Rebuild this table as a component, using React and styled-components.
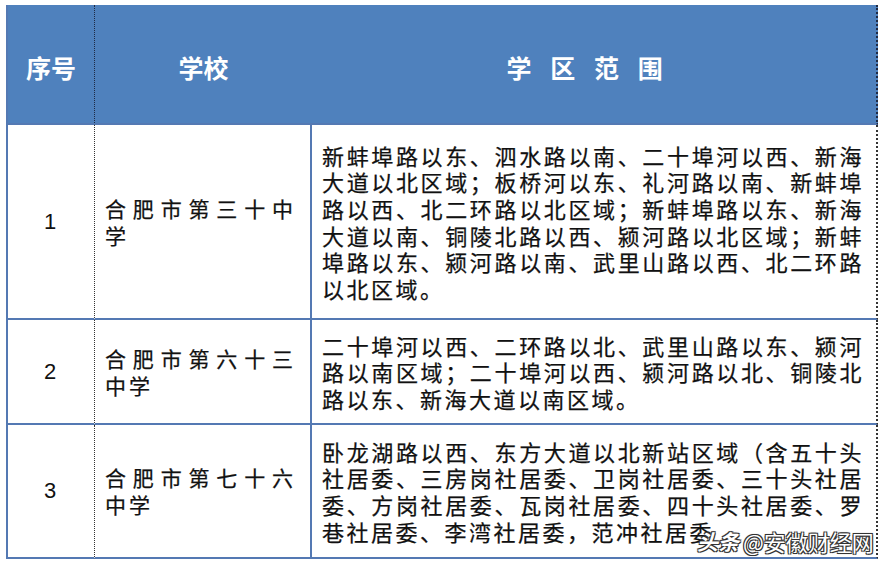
import React from 'react';
import styled, { createGlobalStyle } from 'styled-components';

const GlobalStyle = createGlobalStyle`
  html, body {
    margin: 0;
    padding: 0;
    background: #ffffff;
  }
  body {
    font-family: "Noto Sans CJK SC", "Noto Sans", sans-serif;
    color: #111111;
  }
`;

const Page = styled.div`
  width: 882px;
  height: 562px;
  position: relative;
  overflow: hidden;
  padding: 5px 0 0 6px;
  box-sizing: border-box;
`;

const Table = styled.table`
  width: 870px;
  border-collapse: separate;
  border-spacing: 0;
  table-layout: fixed;
  border-left: 2px solid #5479b3;
`;

const HeadCell = styled.th`
  height: 120px;
  padding: 6px 0 0 0;
  background: #4f81bd;
  color: #ffffff;
  font-size: 25px;
  font-weight: 700;
  text-align: center;
  vertical-align: middle;
  letter-spacing: ${(p) => p.$spread || '0'};
  border-right: ${(p) => p.$edge || 'none'};
  border-bottom: 2px solid #5479b3;
  box-sizing: border-box;
`;

const Row = styled.tr`
  height: ${(p) => p.$h}px;
`;

const NumCell = styled.td`
  padding: 0 2px 0 0;
  text-align: center;
  vertical-align: middle;
  font-family: "Liberation Sans", Arial, sans-serif;
  font-size: 22px;
  border-right: 1px dotted #333333;
  border-bottom: 2px solid #5479b3;
`;

const SchoolCell = styled.td`
  padding: 0 14px 0 10px;
  vertical-align: middle;
  font-size: 21px;
  line-height: 27px;
  letter-spacing: 3px;
  text-align: justify;
  -webkit-text-stroke: 0.25px #111;
  border-right: 2px solid #5479b3;
  border-bottom: 2px solid #5479b3;
`;

const AreaCell = styled.td`
  padding: 0 12px 0 10px;
  vertical-align: middle;
  font-size: 22px;
  line-height: 26.6px;
  letter-spacing: 2.5px;
  text-align: justify;
  -webkit-text-stroke: 0.25px #111;
  border-right: 2px dotted #333333;
  border-bottom: 2px solid #5479b3;
`;

const Watermark = styled.div`
  position: absolute;
  left: 697px;
  top: 525px;
  display: flex;
  align-items: center;
  gap: 4px;
  font-size: 22px;
  color: #ffffff;
  letter-spacing: 0;
  text-shadow:
    -1px -1px 0 #333, 1px -1px 0 #333, -1px 1px 0 #333, 1px 1px 0 #333,
    0 0 2px #333;
`;

const Brand = styled.span`
  font-style: italic;
  font-weight: 700;
  font-size: 21px;
`;

const rows = [
  {
    no: '1',
    h: 195,
    school: '合肥市第三十中学',
    area: '新蚌埠路以东、泗水路以南、二十埠河以西、新海大道以北区域；板桥河以东、礼河路以南、新蚌埠路以西、北二环路以北区域；新蚌埠路以东、新海大道以南、铜陵北路以西、颍河路以北区域；新蚌埠路以东、颍河路以南、武里山路以西、北二环路以北区域。',
  },
  {
    no: '2',
    h: 105,
    school: '合肥市第六十三中学',
    area: '二十埠河以西、二环路以北、武里山路以东、颍河路以南区域；二十埠河以西、颍河路以北、铜陵北路以东、新海大道以南区域。',
  },
  {
    no: '3',
    h: 134,
    school: '合肥市第七十六中学',
    area: '卧龙湖路以西、东方大道以北新站区域（含五十头社居委、三房岗社居委、卫岗社居委、三十头社居委、方岗社居委、瓦岗社居委、四十头社居委、罗巷社居委、李湾社居委，范冲社居委',
  },
];

export default function App() {
  return (
    <>
      <GlobalStyle />
      <Page>
        <Table>
          <colgroup>
            <col style={{ width: 87 }} />
            <col style={{ width: 217 }} />
            <col style={{ width: 566 }} />
          </colgroup>
          <thead>
            <tr>
              <HeadCell $edge="1px dotted #1f2a44">序号</HeadCell>
              <HeadCell>学校</HeadCell>
              <HeadCell $spread="0.75em" $edge="2px dotted #1f2a44">学区范围</HeadCell>
            </tr>
          </thead>
          <tbody>
            {rows.map((r) => (
              <Row key={r.no} $h={r.h}>
                <NumCell>{r.no}</NumCell>
                <SchoolCell>{r.school}</SchoolCell>
                <AreaCell>{r.area}</AreaCell>
              </Row>
            ))}
          </tbody>
        </Table>
        <Watermark>
          <Brand>头条</Brand>
          <span>@安徽财经网</span>
        </Watermark>
      </Page>
    </>
  );
}
